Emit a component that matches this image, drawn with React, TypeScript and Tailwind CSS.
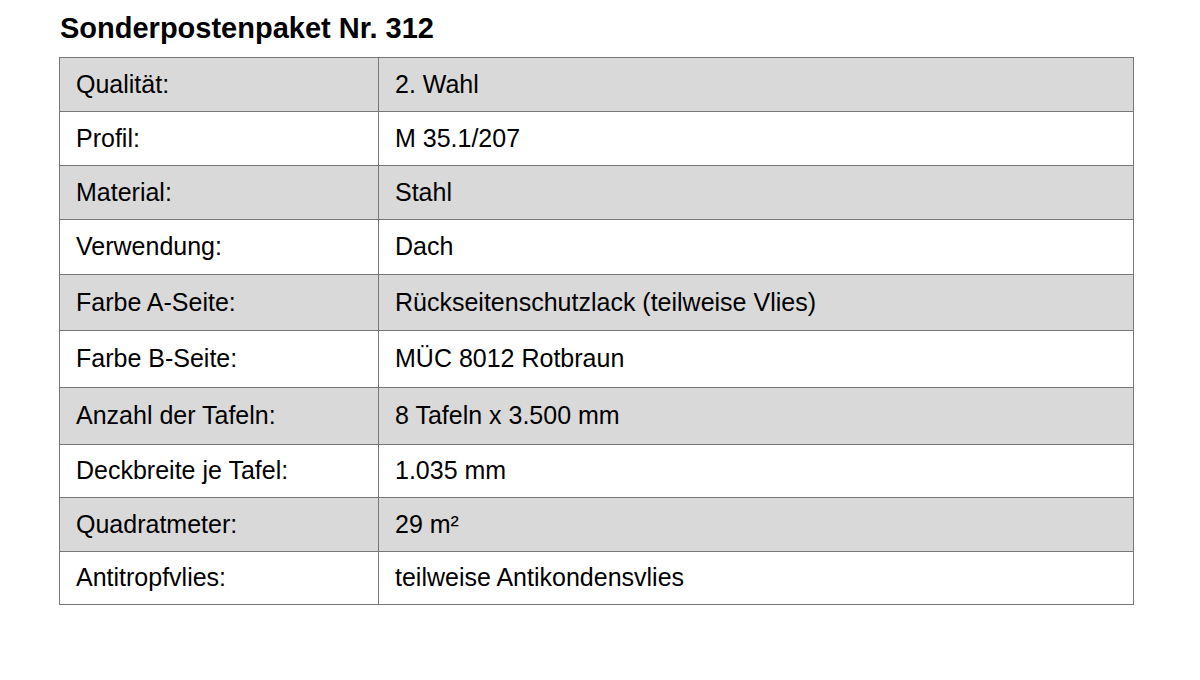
const rows: { label: string; value: string; h: string; shaded: boolean }[] = [
  { label: "Qualität:", value: "2. Wahl", h: "h-[54px]", shaded: true },
  { label: "Profil:", value: "M 35.1/207", h: "h-[54px]", shaded: false },
  { label: "Material:", value: "Stahl", h: "h-[54px]", shaded: true },
  { label: "Verwendung:", value: "Dach", h: "h-[55px]", shaded: false },
  { label: "Farbe A-Seite:", value: "Rückseitenschutzlack (teilweise Vlies)", h: "h-[56px]", shaded: true },
  { label: "Farbe B-Seite:", value: "MÜC 8012 Rotbraun", h: "h-[57px]", shaded: false },
  { label: "Anzahl der Tafeln:", value: "8 Tafeln x 3.500 mm", h: "h-[57px]", shaded: true },
  { label: "Deckbreite je Tafel:", value: "1.035 mm", h: "h-[53px]", shaded: false },
  { label: "Quadratmeter:", value: "29 m²", h: "h-[54px]", shaded: true },
  { label: "Antitropfvlies:", value: "teilweise Antikondensvlies", h: "h-[53px]", shaded: false },
];

export default function App() {
  return (
    <div className="w-[1200px] h-[680px] bg-white pt-[12px] font-['Liberation_Sans',Arial,sans-serif] text-black">
      <h1 className="ml-[60px] text-[29px] leading-[32px] font-bold mb-[13px]">
        Sonderpostenpaket Nr. 312
      </h1>
      <div className="ml-[59px] w-[1075px] border-t border-l border-r border-[#777777]">
        {rows.map((r) => (
          <div
            key={r.label}
            className={`${r.h} grid grid-cols-[319px_1fr] border-b border-[#777777] ${
              r.shaded ? "bg-[#d9d9d9]" : "bg-white"
            }`}
          >
            <div className="flex items-center px-4 border-r border-[#777777] text-[25px]">
              {r.label}
            </div>
            <div className="flex items-center px-4 text-[25px]">{r.value}</div>
          </div>
        ))}
      </div>
    </div>
  );
}
